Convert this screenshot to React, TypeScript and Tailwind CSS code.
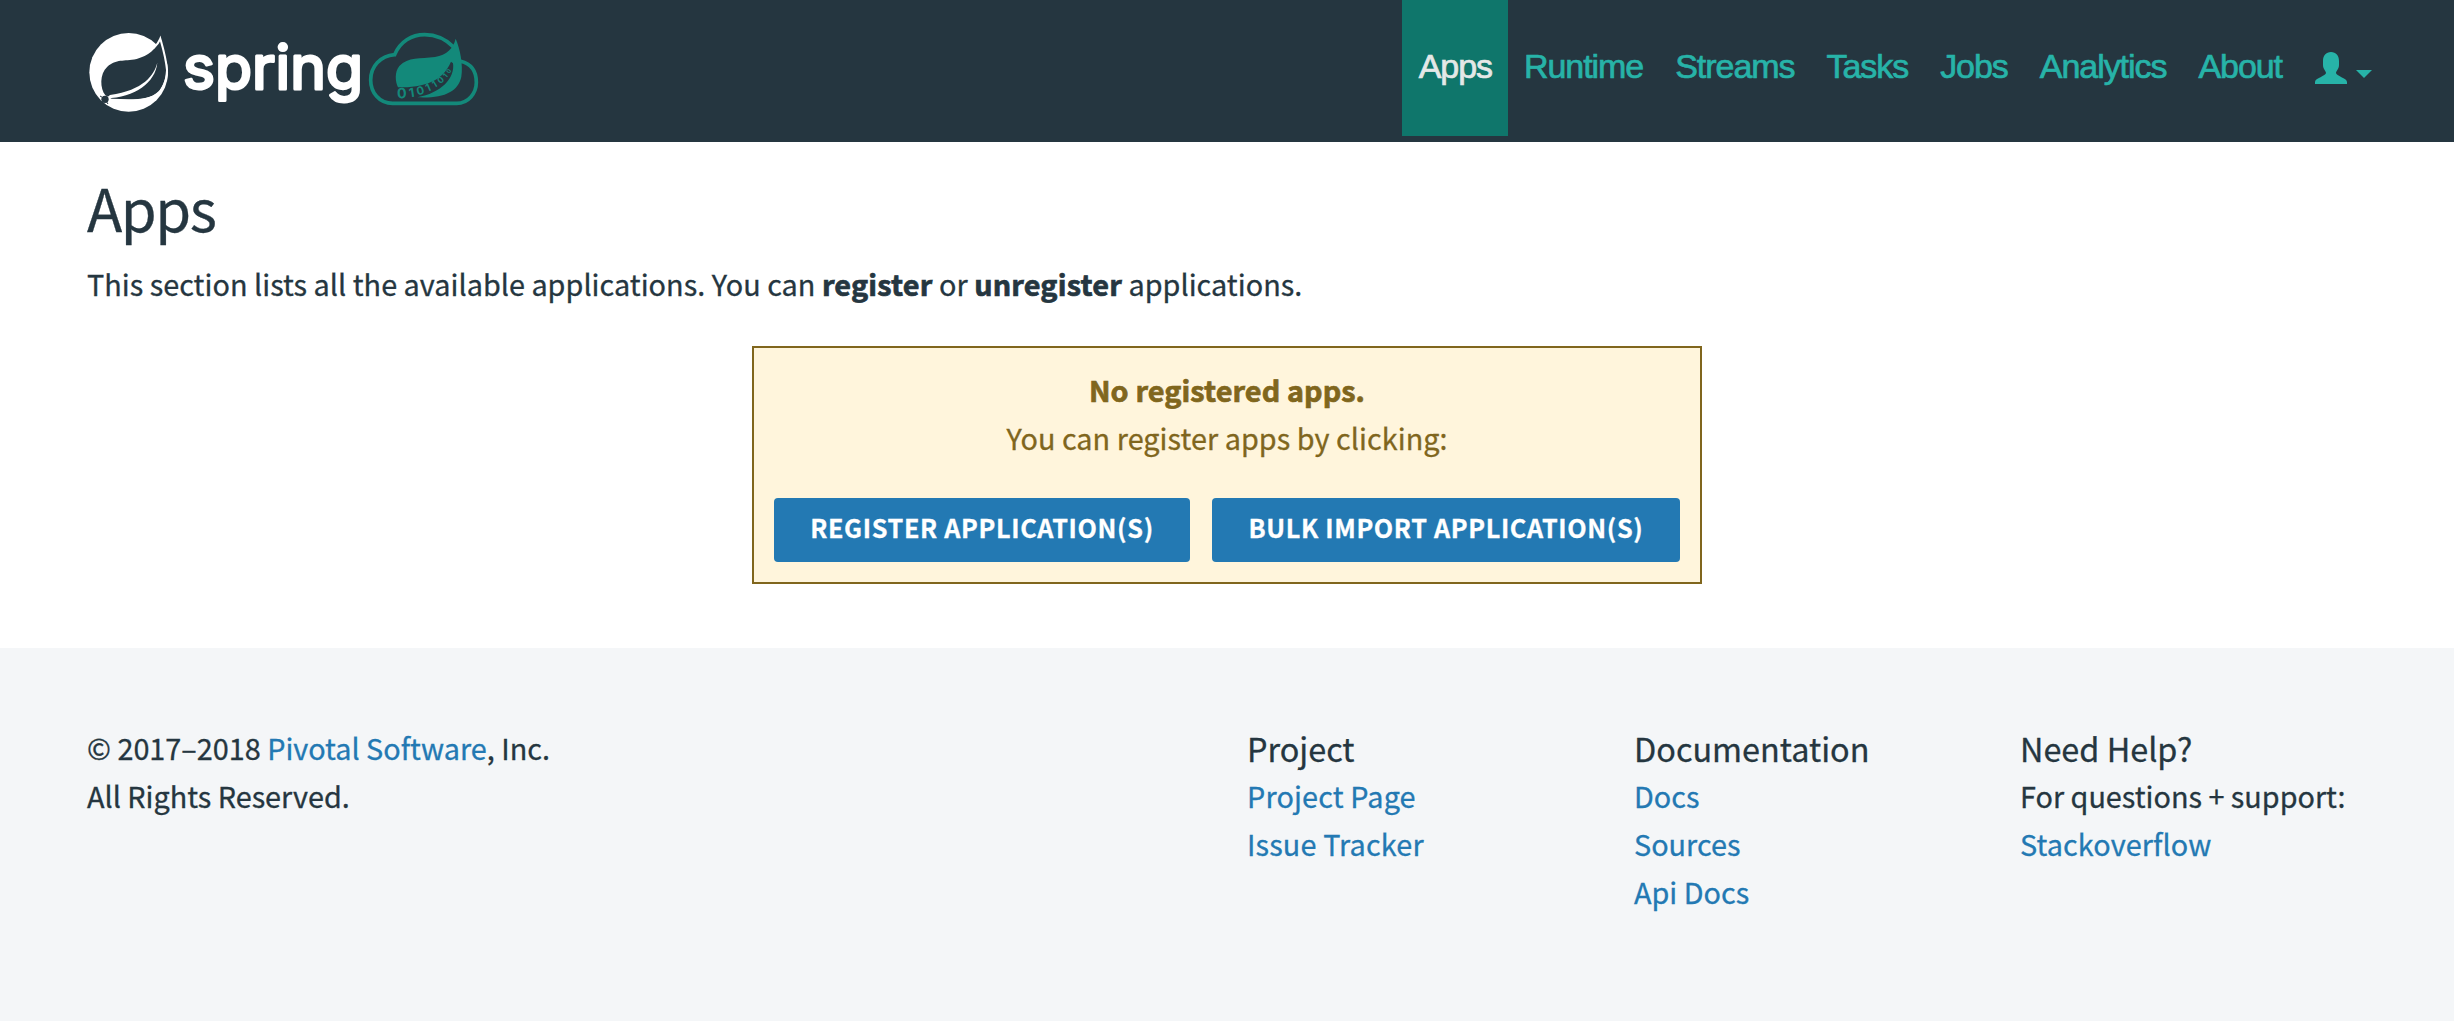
const body = "font-['Noto_Sans_CJK_SC','Noto_Sans_CJK_JP',sans-serif]";

const navItems = ["Runtime", "Streams", "Tasks", "Jobs", "Analytics", "About"];

// Binary digits that run along the vein of the green leaf: x, y, size, rotation, glyph.
const digits: [number, number, number, number, string][] = [
  [996, 265, 43, -3, "0"],
  [1027, 261, 38, -8, "1"],
  [1054, 253, 34, -16, "0"],
  [1079, 243, 32, -24, "1"],
  [1099, 231, 28, -32, "1"],
  [1118, 217, 26, -42, "0"],
  [1132, 202, 22, -50, "1"],
  [1142, 187, 18, -58, "0"],
];

function Logo() {
  return (
    <svg className="h-[132px] w-[430px]" viewBox="0 0 1290 396" aria-label="spring">
      <circle cx="176" cy="187" r="118" fill="#fff" />
      <path d="M271 88 C258 118 235 138 200 147 C160 155 140 146 112 170 C88 192 90 235 106 256 L125 266 C180 268 240 272 266 245 C300 205 290 140 271 88Z" fill="#253640" />
      <path d="M250 115 C260 106 267 97 271 86 C280 118 288 145 291 180 C293 215 270 262 225 280" stroke="#fff" strokeWidth="6" fill="none" />
      <path d="M262 158 C252 195 222 240 120 255 L108 265 C195 262 256 218 262 158Z" fill="#fff" />
      <path d="M118 268 C180 270 235 274 268 242 L274 250 L225 290 L120 285Z" fill="#fff" />
      <circle cx="105" cy="268" r="11" fill="#253640" />
      <path d="M90 258 L97 262 M110 276 L114 282" stroke="#253640" strokeWidth="3" />
      <text x="339" y="236" textLength="540" lengthAdjust="spacingAndGlyphs" fontFamily="Inter, sans-serif" fontSize="181" fontWeight="400" fill="#fff" stroke="#fff" strokeWidth="9" strokeLinejoin="round">spring</text>
      <path d="M1152 112 C1130 90 1100 74 1064 74 C1025 74 990 95 974 134 C930 138 902 170 902 210 C902 247 927 280 968 280 L1160 280 C1195 280 1219 250 1219 217 C1219 185 1205 162 1172 154" fill="none" stroke="#13897a" strokeWidth="11" />
      <path d="M1157 86 C1150 115 1130 135 1095 141 C1050 147 1015 140 988 168 C973 186 976 215 984 232 C1062 232 1118 215 1143 155 L1149 160 C1156 205 1112 250 1042 262 C1120 266 1165 245 1174 200 C1180 165 1170 115 1157 86Z" fill="#13897a" />
      <g fill="#13897a" fontFamily="Inter, sans-serif" fontWeight="700" textAnchor="middle">
        {digits.map(([x, y, size, angle, d]) => (
          <text key={x} x={x} y={y} fontSize={size} transform={`rotate(${angle} ${x} ${y})`}>{d}</text>
        ))}
      </g>
    </svg>
  );
}

export default function App() {
  return (
    <div className={"min-h-[1021px] bg-white text-[28.8px] leading-[48px] text-[#253640] [-webkit-text-stroke:0.3px] " + body}>
      <header className="flex h-[142px] items-start justify-between bg-[#253640] pr-[66px] pl-[70px] [-webkit-text-stroke:0px]">
        <div className="pt-[10px]"><Logo /></div>
        <nav className="flex h-[136px] font-['Liberation_Sans',Arial,sans-serif] text-[34px] leading-[132px] tracking-[-1.05px] text-[#27b3a8] [-webkit-text-stroke:0.7px]">
          <a className="bg-[#0f766b] pr-4 pl-[17px] text-[#e4e8e7]">Apps</a>
          {navItems.map((n) => <a key={n} className="px-4">{n}</a>)}
          <a className="flex items-start pt-[52px] pr-4 pl-[17px]">
            <svg className="h-8 w-8" viewBox="0 0 32 32" fill="currentColor">
              <path d="M16 0C21 0 24 3.500 24 9V13C24 17 21 19 21 21C21 24 32 26 32 30V32H0V30C0 26 11 24 11 21C11 19 8 17 8 13V9C8 3.500 11 0 16 0Z" />
            </svg>
            <svg className="mt-[18px] ml-[9px] h-2 w-4" viewBox="0 0 16 8" fill="currentColor"><path d="M0 0H16L8 8Z" /></svg>
          </a>
        </nav>
      </header>
      <main className="h-[506px] px-[87px] pt-[30px]">
        <h1 className="text-[58px] leading-[70px] tracking-[-1.5px]">Apps</h1>
        <p className="mt-[18px] tracking-[0.03px]">This section lists all the available applications. You can <strong className="tracking-[0.2px] [-webkit-text-stroke:0.7px]">register</strong> or <strong className="tracking-[0.2px] [-webkit-text-stroke:0.7px]">unregister</strong> applications.</p>
        <section className="mx-auto mt-[38px] h-[238px] w-[950px] border-2 border-[#80661d] bg-[#fff5dc] px-5 pt-[18px] text-center text-[#80661d]">
          <p className="font-bold tracking-[0.1px] [-webkit-text-stroke:0.7px]">No registered apps.</p>
          <p className="tracking-[0.05px]">You can register apps by clicking:</p>
          <div className="mt-[36px] flex gap-[22px] text-[25.2px] leading-[58px] font-bold tracking-[0.65px] text-white">
            <button className="h-16 w-[416px] rounded bg-[#2379b3] pb-[6px]">REGISTER APPLICATION(S)</button>
            <button className="h-16 w-[468px] rounded bg-[#2379b3] pb-[6px]">BULK IMPORT APPLICATION(S)</button>
          </div>
        </section>
      </main>
      <footer className="flex h-[373px] bg-[#f4f6f8] pt-[76px] pl-[87px]">
        <div className="w-[1160px]">
          <p>© 2017–2018 <a className="text-[#2379b3]">Pivotal Software</a>, Inc.</p>
          <p>All Rights Reserved.</p>
        </div>
        <div className="flex w-[387px] flex-col text-[#2379b3]">
          <h2 className="text-[32.4px] text-[#253640]">Project</h2><a className="tracking-[0.15px]">Project Page</a><a className="tracking-[0.15px]">Issue Tracker</a>
        </div>
        <div className="flex w-[386px] flex-col text-[#2379b3]">
          <h2 className="text-[32.4px] text-[#253640]">Documentation</h2><a>Docs</a><a>Sources</a><a>Api Docs</a>
        </div>
        <div className="flex flex-col">
          <h2 className="text-[32.4px]">Need Help?</h2><span>For questions + support:</span><a className="tracking-[0.1px] text-[#2379b3]">Stackoverflow</a>
        </div>
      </footer>
    </div>
  );
}
